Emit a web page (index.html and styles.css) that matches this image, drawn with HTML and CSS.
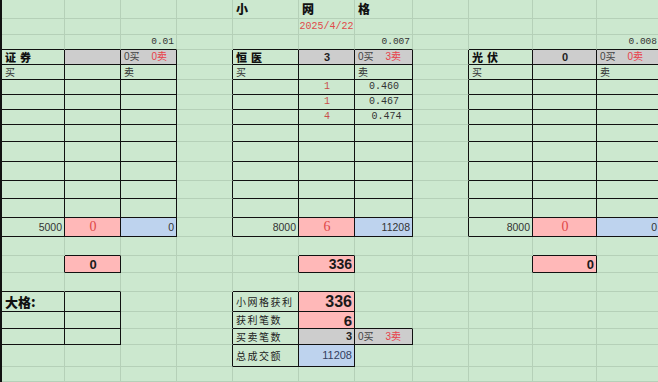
FILE: index.html
```html
<!DOCTYPE html>
<html lang="zh">
<head>
<meta charset="utf-8">
<title>小网格</title>
<link rel="stylesheet" href="styles.css">
</head>
<body>
<div class="sheet">
<table class="grid">
<colgroup>
<col class="cA"><col class="cB"><col class="cC"><col class="cD"><col class="cE"><col class="cF"><col class="cG"><col class="cH"><col class="cI"><col class="cJ"><col class="cK">
</colgroup>
<tbody>
<tr class="h19"><td></td><td></td><td></td><td></td><td class="title">小</td><td class="title">网</td><td class="title">格</td><td></td><td></td><td></td><td></td></tr>
<tr class="h16"><td></td><td></td><td></td><td></td><td></td><td class="date">2025/4/22</td><td></td><td></td><td></td><td></td><td></td></tr>
<tr class="h15"><td class="kb"></td><td class="kb"></td><td class="kb r step">0.01</td><td></td><td class="kb"></td><td class="kb"></td><td class="kb r step">0.007</td><td></td><td class="kb"></td><td class="kb"></td><td class="kb r step">0.008</td></tr>
<tr class="h15"><td class="k lab">证券</td><td class="k gy"></td><td class="k gy bs"><span>0买</span><span class="sell">0卖</span></td><td class="kr"></td><td class="k lab">恒医</td><td class="k gy c bnum">3</td><td class="k gy bs"><span>0买</span><span class="sell">3卖</span></td><td class="kr"></td><td class="k lab">光伏</td><td class="k gy c bnum">0</td><td class="k gy bs"><span>0买</span><span class="sell">0卖</span></td></tr>
<tr class="h15"><td class="k cn">买</td><td class="k"></td><td class="k cn">卖</td><td class="kr"></td><td class="k cn">买</td><td class="k"></td><td class="k cn">卖</td><td class="kr"></td><td class="k cn">买</td><td class="k"></td><td class="k cn">卖</td></tr>
<tr class="h15"><td class="k"></td><td class="k"></td><td class="k"></td><td class="kr"></td><td class="k"></td><td class="k c qty">1</td><td class="k c price">0.460</td><td class="kr"></td><td class="k"></td><td class="k"></td><td class="k"></td></tr>
<tr class="h15"><td class="k"></td><td class="k"></td><td class="k"></td><td class="kr"></td><td class="k"></td><td class="k c qty">1</td><td class="k c price">0.467</td><td class="kr"></td><td class="k"></td><td class="k"></td><td class="k"></td></tr>
<tr class="h15"><td class="k"></td><td class="k"></td><td class="k"></td><td class="kr"></td><td class="k"></td><td class="k c qty">4</td><td class="k c price pr3">0.474</td><td class="kr"></td><td class="k"></td><td class="k"></td><td class="k"></td></tr>
<tr class="h17"><td class="k"></td><td class="k"></td><td class="k"></td><td class="kr"></td><td class="k"></td><td class="k"></td><td class="k"></td><td class="kr"></td><td class="k"></td><td class="k"></td><td class="k"></td></tr>
<tr class="h20"><td class="k"></td><td class="k"></td><td class="k"></td><td class="kr"></td><td class="k"></td><td class="k"></td><td class="k"></td><td class="kr"></td><td class="k"></td><td class="k"></td><td class="k"></td></tr>
<tr class="h19"><td class="k"></td><td class="k"></td><td class="k"></td><td class="kr"></td><td class="k"></td><td class="k"></td><td class="k"></td><td class="kr"></td><td class="k"></td><td class="k"></td><td class="k"></td></tr>
<tr class="h18"><td class="k"></td><td class="k"></td><td class="k"></td><td class="kr"></td><td class="k"></td><td class="k"></td><td class="k"></td><td class="kr"></td><td class="k"></td><td class="k"></td><td class="k"></td></tr>
<tr class="h19"><td class="k"></td><td class="k"></td><td class="k"></td><td class="kr"></td><td class="k"></td><td class="k"></td><td class="k"></td><td class="kr"></td><td class="k"></td><td class="k"></td><td class="k"></td></tr>
<tr class="h19"><td class="k r num">5000</td><td class="k pk c rednum">0</td><td class="k bl r num">0</td><td class="kr"></td><td class="k r num">8000</td><td class="k pk c rednum">6</td><td class="k bl r num">11208</td><td class="kr"></td><td class="k r num">8000</td><td class="k pk c rednum">0</td><td class="k bl r num">0</td></tr>
<tr class="h19"><td></td><td class="kb"></td><td></td><td></td><td></td><td class="kb"></td><td></td><td></td><td></td><td class="kb"></td><td></td></tr>
<tr class="h17"><td class="kr"></td><td class="k pk c bold13">0</td><td></td><td></td><td class="kr"></td><td class="k pk r bold14">336</td><td></td><td></td><td class="kr"></td><td class="k pk r bold13">0</td><td></td></tr>
<tr class="h19"><td class="kb"></td><td class="kb"></td><td></td><td></td><td class="kb"></td><td class="kb"></td><td></td><td></td><td></td><td></td><td></td></tr>
<tr class="h20"><td class="k big">大格:</td><td class="k"></td><td></td><td class="kr"></td><td class="k sum">小网格获利</td><td class="k pk r bold16">336</td><td></td><td></td><td></td><td></td><td></td></tr>
<tr class="h17"><td class="k"></td><td class="k"></td><td></td><td class="kr"></td><td class="k sum">获利笔数</td><td class="k pk r bold15">6</td><td class="kb"></td><td></td><td></td><td></td><td></td></tr>
<tr class="h16"><td class="k"></td><td class="k"></td><td></td><td class="kr"></td><td class="k sum">买卖笔数</td><td class="k gy r bnum">3</td><td class="k gy bs"><span>0买</span><span class="sell">3卖</span></td><td></td><td></td><td></td><td></td></tr>
<tr class="h22"><td></td><td></td><td></td><td class="kr"></td><td class="k sum">总成交额</td><td class="k bl r total">11208</td><td></td><td></td><td></td><td></td><td></td></tr>
<tr class="h15"><td></td><td></td><td></td><td></td><td></td><td></td><td></td><td></td><td></td><td></td><td></td></tr>
</tbody>
</table>
</div>
</body>
</html>
```
FILE: styles.css
```css
html, body {
  margin: 0;
  padding: 0;
  background: #cce8cf;
  overflow: hidden;
}

.sheet {
  width: 656px;
  height: 382px;
  border-left: 2px solid #111;
  overflow: hidden;
}

.grid {
  table-layout: fixed;
  border-collapse: separate;
  border-spacing: 0;
  width: 656px;
  font-family: "Liberation Sans", "Noto Sans CJK SC", sans-serif;
  font-size: 10px;
  color: #2a2a2a;
}

.cA { width: 63px; }
.cB { width: 56px; }
.cC { width: 56px; }
.cD { width: 56px; }
.cE { width: 66px; }
.cF { width: 56px; }
.cG { width: 58px; }
.cH { width: 56px; }
.cI { width: 64px; }
.cJ { width: 64px; }
.cK { width: 63px; }

.h15 { height: 15px; }
.h16 { height: 16px; }
.h17 { height: 17px; }
.h18 { height: 18px; }
.h19 { height: 19px; }
.h20 { height: 20px; }
.h22 { height: 22px; }

.grid td {
  box-sizing: border-box;
  padding: 0 2px 0 3px;
  border-right: 1px solid #b5d0b8;
  border-bottom: 1px solid #b5d0b8;
  white-space: nowrap;
  line-height: 1;
  vertical-align: middle;
  overflow: visible;
}

/* black table borders */
.grid td.k { border-right-color: #111; border-bottom-color: #111; }
.grid td.kb { border-bottom-color: #111; }
.grid td.kr { border-right-color: #111; }

/* fills */
.gy { background: #cdcdcd; }
.pk { background: #ffb8b8; }
.bl { background: #bed3ee; }

.r { text-align: right; }
.c { text-align: center; }

.title {
  font-family: "Noto Sans CJK SC", sans-serif;
  font-weight: 900;
  font-size: 12px;
  color: #111;
  vertical-align: bottom;
  padding-bottom: 1px;
}

.grid td.date {
  font-family: "Liberation Mono", monospace;
  font-size: 10px;
  color: #e04a4a;
  text-align: center;
  padding: 0;
}

.step {
  font-family: "Liberation Mono", monospace;
  font-size: 9.5px;
  color: #333;
}

.lab {
  font-family: "Noto Sans CJK SC", sans-serif;
  font-weight: 900;
  font-size: 11px;
  letter-spacing: 4px;
  color: #111;
}

.cn {
  font-family: "Noto Sans CJK SC", sans-serif;
  font-size: 10px;
  color: #333;
}

.bs {
  font-family: "Liberation Sans", "Noto Sans CJK SC", sans-serif;
  font-size: 10px;
  color: #444;
}
.bs .sell {
  color: #e8404a;
  margin-left: 12px;
}

.bnum {
  font-weight: 700;
  font-size: 11px;
  color: #222;
}

.qty {
  font-family: "Liberation Mono", monospace;
  font-size: 10px;
  color: #c8504a;
}

.price {
  font-family: "Liberation Mono", monospace;
  font-size: 10px;
  color: #333;
}
.grid td.pr3 { padding-left: 8px; }

.num {
  font-size: 10.5px;
  color: #333;
}

.rednum {
  font-family: "Liberation Serif", serif;
  font-size: 14px;
  color: #e04848;
}

.bold13 { font-weight: 700; font-size: 13px; color: #1a1a1a; }
.bold14 { font-weight: 700; font-size: 14px; color: #1a1a1a; }
.bold15 { font-weight: 700; font-size: 15px; color: #1a1a1a; }
.bold16 { font-weight: 700; font-size: 16px; color: #1a1a1a; }

.big {
  font-family: "Noto Sans CJK SC", sans-serif;
  font-weight: 900;
  font-size: 13px;
  color: #111;
}

.sum {
  font-family: "Noto Sans CJK SC", sans-serif;
  font-size: 10px;
  letter-spacing: 1.5px;
  color: #222;
}

.total {
  font-size: 11px;
  color: #34405e;
}
```
